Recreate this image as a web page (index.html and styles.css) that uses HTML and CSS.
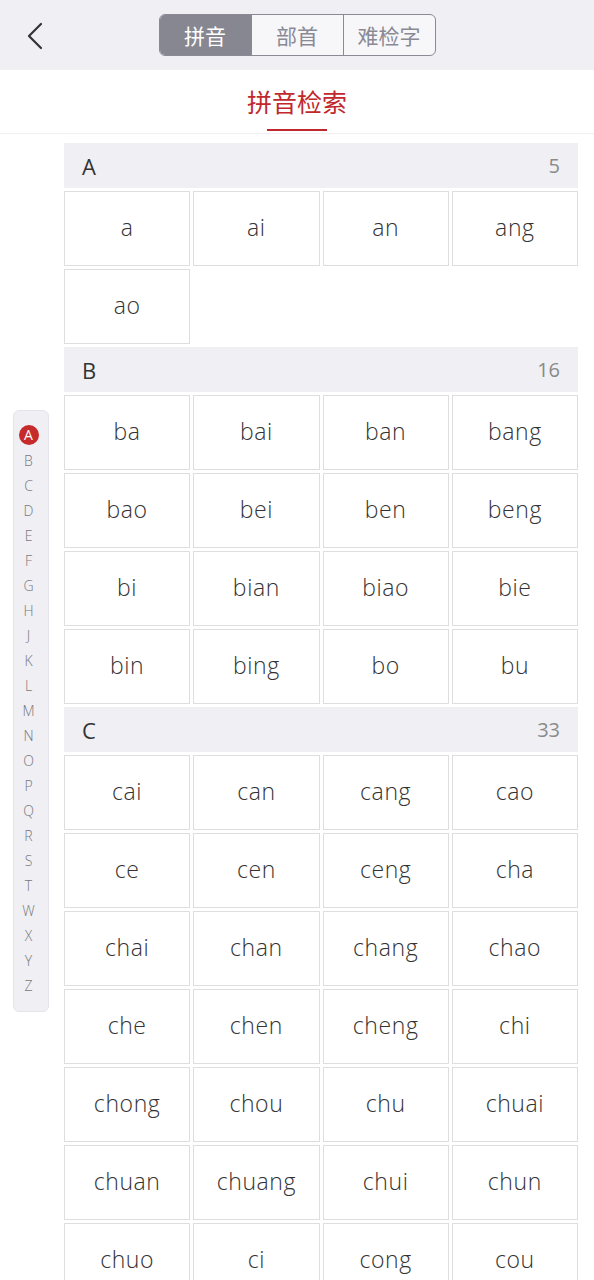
FILE: index.html
```html
<!DOCTYPE html>
<html>
<head>
    <meta charset="utf-8">
    <title>拼音检索</title>
    <link rel="stylesheet" href="styles.css">
</head>
<body>
    <div class="topbar">
        <a class="back" href="#">
            <svg width="20" height="28" viewBox="0 0 20 28">
                <polyline points="16,2 4,14 16,26" fill="none" stroke="#333" stroke-width="2.2" stroke-linecap="round" stroke-linejoin="round"/>
            </svg>
        </a>
        <div class="segments">
            <span class="seg active">拼音</span>
            <span class="seg">部首</span>
            <span class="seg">难检字</span>
        </div>
    </div>

    <div class="title">
        <h1>拼音检索</h1>
    </div>

    <div class="index-bar">
        <span class="current">A</span>
        <span>B</span><span>C</span><span>D</span><span>E</span><span>F</span>
        <span>G</span><span>H</span><span>J</span><span>K</span><span>L</span>
        <span>M</span><span>N</span><span>O</span><span>P</span><span>Q</span>
        <span>R</span><span>S</span><span>T</span><span>W</span><span>X</span>
        <span>Y</span><span>Z</span>
    </div>

    <div class="list">
        <div class="group-head"><span>A</span><span class="count">5</span></div>
        <div class="grid">
            <div class="cell">a</div><div class="cell">ai</div><div class="cell">an</div><div class="cell">ang</div>
            <div class="cell">ao</div>
        </div>

        <div class="group-head"><span>B</span><span class="count">16</span></div>
        <div class="grid">
            <div class="cell">ba</div><div class="cell">bai</div><div class="cell">ban</div><div class="cell">bang</div>
            <div class="cell">bao</div><div class="cell">bei</div><div class="cell">ben</div><div class="cell">beng</div>
            <div class="cell">bi</div><div class="cell">bian</div><div class="cell">biao</div><div class="cell">bie</div>
            <div class="cell">bin</div><div class="cell">bing</div><div class="cell">bo</div><div class="cell">bu</div>
        </div>

        <div class="group-head"><span>C</span><span class="count">33</span></div>
        <div class="grid">
            <div class="cell">cai</div><div class="cell">can</div><div class="cell">cang</div><div class="cell">cao</div>
            <div class="cell">ce</div><div class="cell">cen</div><div class="cell">ceng</div><div class="cell">cha</div>
            <div class="cell">chai</div><div class="cell">chan</div><div class="cell">chang</div><div class="cell">chao</div>
            <div class="cell">che</div><div class="cell">chen</div><div class="cell">cheng</div><div class="cell">chi</div>
            <div class="cell">chong</div><div class="cell">chou</div><div class="cell">chu</div><div class="cell">chuai</div>
            <div class="cell">chuan</div><div class="cell">chuang</div><div class="cell">chui</div><div class="cell">chun</div>
            <div class="cell">chuo</div><div class="cell">ci</div><div class="cell">cong</div><div class="cell">cou</div>
            <div class="cell">cu</div><div class="cell">cuan</div><div class="cell">cui</div><div class="cell">cun</div>
            <div class="cell">cuo</div>
        </div>
    </div>
</body>
</html>
```

FILE: styles.css
```css
body {
    margin: 0;
    background: #fff;
    font-family: "Open Sans", "Noto Sans CJK SC", sans-serif;
    color: #333;
}

.topbar {
    height: 70px;
    background-color: #efeff4;
    display: flex;
    align-items: center;
    justify-content: center;
    position: relative;
}

.back {
    position: absolute;
    left: 25px;
    top: 22px;
}

.segments {
    display: flex;
    margin-top: -1px;
    border: 1.5px solid #8a8a95;
    border-radius: 6px;
    overflow: hidden;
    background: #f7f7fa;
}

.seg {
    width: 91px;
    height: 40px;
    line-height: 40px;
    text-align: center;
    font-family: "Noto Sans CJK SC", sans-serif;
    font-size: 21px;
    color: #8a8a95;
    border-left: 1.5px solid #8a8a95;
}

.seg:first-child {
    border-left: none;
}

.seg.active {
    background: #878792;
    color: #fff;
}

.title {
    height: 63px;
    border-bottom: 1px solid #f1f1f4;
    display: flex;
    justify-content: center;
}

.title h1 {
    margin: 0;
    padding-top: 13px;
    height: 48px;
    font-family: "Noto Sans CJK SC", sans-serif;
    font-weight: normal;
    font-size: 25px;
    line-height: 36px;
    color: #c0282d;
    position: relative;
}

.title h1:after {
    content: "";
    position: absolute;
    left: 20px;
    right: 20px;
    bottom: 0;
    height: 2px;
    background: #c0282d;
}

.index-bar {
    position: fixed;
    left: 13px;
    top: 410px;
    width: 29px;
    padding: 12px 5px 13px 0;
    background: #efeff4;
    border: 1px solid #e4e4ea;
    border-radius: 6px;
    display: flex;
    flex-direction: column;
    align-items: center;
}

.index-bar span {
    height: 25px;
    line-height: 25px;
    font-size: 14px;
    font-weight: 300;
    color: #77777d;
}

.index-bar .current {
    width: 20px;
    height: 20px;
    margin: 2px 0 3px;
    line-height: 20px;
    text-align: center;
    border-radius: 50%;
    background: #c62a2a;
    color: #fff;
    font-weight: normal;
}

.list {
    margin: 9px 16px 0 64px;
}

.group-head {
    height: 45px;
    background: #efeff4;
    display: flex;
    align-items: center;
    justify-content: space-between;
    padding: 0 18px;
    font-size: 22px;
    color: #333;
    margin-bottom: 3px;
}

.group-head .count {
    font-size: 20px;
    color: #8a8a8a;
}

.grid {
    display: grid;
    grid-template-columns: repeat(4, 1fr);
    gap: 3px;
    margin-bottom: 3px;
}

.cell {
    height: 75px;
    padding-bottom: 3px;
    box-sizing: border-box;
    border: 1px solid #dedede;
    display: flex;
    align-items: center;
    justify-content: center;
    font-size: 23px;
    font-weight: 300;
    letter-spacing: 0.6px;
    color: #333;
}
```
